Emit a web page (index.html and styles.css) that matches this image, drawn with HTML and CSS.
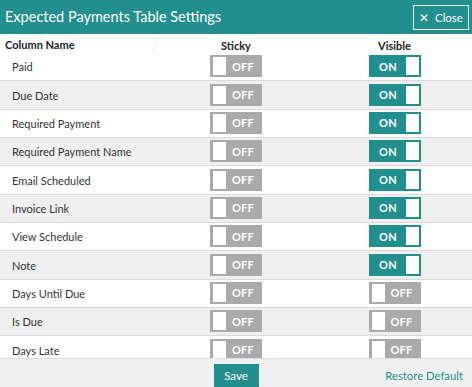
FILE: index.html
```html
<html>
<head>
<title>Expected Payments Table Settings</title>
<link rel="stylesheet" href="styles.css">
</head>
<body>
<div class="modal">
  <div class="modal-head">
    <span class="modal-title">Expected Payments Table Settings</span>
    <button class="close-btn">&#x2715;&nbsp; Close</button>
  </div>

  <div class="cols">
    <div class="col-name">Column Name</div>
    <div class="col-mid">Sticky</div>
    <div class="col-mid">Visible</div>
  </div>

  <div class="rows">
    <div class="row"><div class="name">Paid</div><div class="cell"><span class="tgl off"><i></i><b>OFF</b></span></div><div class="cell"><span class="tgl on"><b>ON</b><i></i></span></div></div>
    <div class="row"><div class="name">Due Date</div><div class="cell"><span class="tgl off"><i></i><b>OFF</b></span></div><div class="cell"><span class="tgl on"><b>ON</b><i></i></span></div></div>
    <div class="row"><div class="name">Required Payment</div><div class="cell"><span class="tgl off"><i></i><b>OFF</b></span></div><div class="cell"><span class="tgl on"><b>ON</b><i></i></span></div></div>
    <div class="row"><div class="name">Required Payment Name</div><div class="cell"><span class="tgl off"><i></i><b>OFF</b></span></div><div class="cell"><span class="tgl on"><b>ON</b><i></i></span></div></div>
    <div class="row"><div class="name">Email Scheduled</div><div class="cell"><span class="tgl off"><i></i><b>OFF</b></span></div><div class="cell"><span class="tgl on"><b>ON</b><i></i></span></div></div>
    <div class="row"><div class="name">Invoice Link</div><div class="cell"><span class="tgl off"><i></i><b>OFF</b></span></div><div class="cell"><span class="tgl on"><b>ON</b><i></i></span></div></div>
    <div class="row"><div class="name">View Schedule</div><div class="cell"><span class="tgl off"><i></i><b>OFF</b></span></div><div class="cell"><span class="tgl on"><b>ON</b><i></i></span></div></div>
    <div class="row"><div class="name">Note</div><div class="cell"><span class="tgl off"><i></i><b>OFF</b></span></div><div class="cell"><span class="tgl on"><b>ON</b><i></i></span></div></div>
    <div class="row"><div class="name">Days Until Due</div><div class="cell"><span class="tgl off"><i></i><b>OFF</b></span></div><div class="cell"><span class="tgl off"><i></i><b>OFF</b></span></div></div>
    <div class="row"><div class="name">Is Due</div><div class="cell"><span class="tgl off"><i></i><b>OFF</b></span></div><div class="cell"><span class="tgl off"><i></i><b>OFF</b></span></div></div>
    <div class="row"><div class="name">Days Late</div><div class="cell"><span class="tgl off"><i></i><b>OFF</b></span></div><div class="cell"><span class="tgl off"><i></i><b>OFF</b></span></div></div>
  </div>

  <div class="modal-foot">
    <div></div>
    <div class="cell"><button class="save-btn">Save</button></div>
    <div class="restore"><a href="#">Restore Default</a></div>
  </div>
</div>
</body>
</html>
```

FILE: styles.css
```css
body {
  margin: 0;
  font-family: Lato, "Open Sans", sans-serif;
  color: #333;
  background: #fff;
}

.modal {
  width: 472px;
  height: 387px;
  display: flex;
  flex-direction: column;
  overflow: hidden;
}

.modal-head {
  height: 34px;
  flex: none;
  background-color: #228f8f;
  display: flex;
  align-items: center;
  justify-content: space-between;
  padding: 0 3px 0 5px;
  box-sizing: border-box;
}
.modal-title {
  color: #fff;
  font-size: 14.5px;
  margin-top: -1px;
}
.close-btn {
  width: 56px;
  height: 25px;
  margin-top: 1px;
  border: 1.5px solid #fff;
  background: transparent;
  color: #fff;
  font-family: Lato, sans-serif;
  font-size: 11.5px;
  padding: 0;
}

.cols, .row, .modal-foot {
  display: grid;
  grid-template-columns: 155px 162px 1fr;
}

.cols {
  height: 19px;
  flex: none;
  box-sizing: border-box;
  padding-top: 3px;
  font-size: 11px;
  font-weight: bold;
  color: #222;
  align-items: center;
}
.col-name {
  padding-left: 5px;
  height: 16px;
  line-height: 16px;
  border-right: 1px solid #eee;
}
.col-mid {
  text-align: center;
}

.rows {
  flex: 1;
  overflow: hidden;
}
.row {
  height: 28.35px;
  box-sizing: border-box;
  border-bottom: 1px solid #d9d9d9;
  align-items: center;
  font-size: 11px;
}
.row:nth-child(even) {
  background-color: #efefef;
}
.name {
  padding-left: 12px;
  color: #333;
}
.cell {
  display: flex;
  justify-content: center;
}

.tgl {
  width: 52px;
  height: 22px;
  box-sizing: border-box;
  padding: 2px;
  display: flex;
  align-items: center;
  color: #fff;
  font-size: 11px;
  margin-top: -1px;
}
.tgl i {
  width: 13px;
  height: 18px;
  background: #fff;
  flex: none;
}
.tgl b {
  flex: 1;
  text-align: center;
  letter-spacing: 0.2px;
}
.tgl.off {
  background-color: #aaaaaa;
  padding-left: 3px;
}
.tgl.on {
  background-color: #228f8f;
}

.modal-foot {
  height: 29px;
  flex: none;
  background-color: #f0f0f0;
  border-top: 1px solid #dcdcdc;
  box-sizing: border-box;
  align-items: start;
  padding-top: 5px;
}
.save-btn {
  width: 45px;
  height: 23px;
  border: none;
  background-color: #228f8f;
  color: #fff;
  font-family: Lato, sans-serif;
  font-size: 11.5px;
  padding: 0;
}
.restore {
  text-align: right;
  padding-right: 9px;
  padding-top: 5px;
  font-size: 11.3px;
}
.restore a {
  color: #228f8f;
  text-decoration: none;
}
```
